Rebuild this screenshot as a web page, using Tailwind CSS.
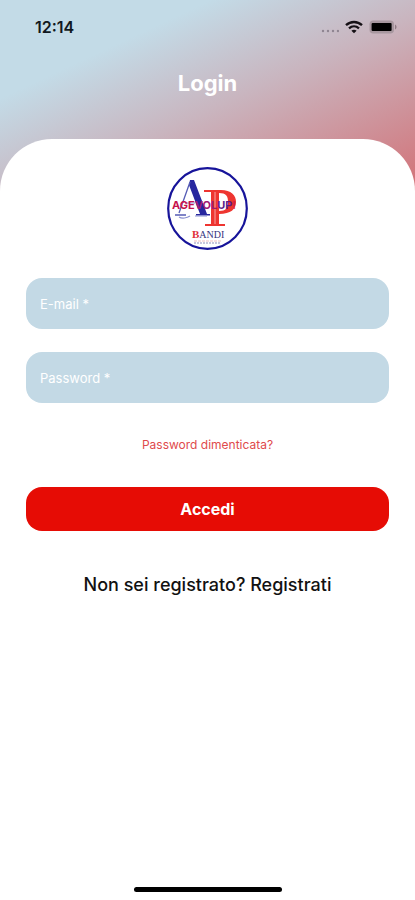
<!DOCTYPE html>
<html lang="it">
<head>
<meta charset="utf-8">
<meta name="viewport" content="width=device-width, initial-scale=1">
<title>Login</title>
<script src="https://cdn.jsdelivr.net/npm/@tailwindcss/browser@4"></script>
</head>
<body class="flex min-h-screen flex-col bg-[linear-gradient(155deg,#c3dbe7_9%,#c9b5bf_19%,#d2767c_34%,#e60b05_62%)] font-['Inter','Liberation_Sans',sans-serif]">
  <div class="flex h-[54px] items-center justify-between pl-[35px] pr-[18px] text-base font-semibold text-[#101820]">
    <span>12:14</span>
    <div class="flex items-center gap-1.5">
      <svg class="h-4 w-5" viewBox="0 0 20 16" fill="#8f8591" aria-hidden="true"><circle cx="4" cy="12" r="1.2"/><circle cx="9" cy="12" r="1.2"/><circle cx="14" cy="12" r="1.2"/><circle cx="19" cy="12" r="1.2"/></svg>
      <svg class="h-3.5 w-4.5" viewBox="0 0 18 14" fill="none" stroke="#151015" stroke-width="2.3" aria-hidden="true"><path d="M1 5.2C5.6.9 12.4.9 17 5.2M4 8.4c2.9-2.6 7.1-2.6 10 0"/><path d="M9 13.3 6.4 10.7c1.5-1.3 3.7-1.3 5.2 0z" fill="#151015" stroke="none"/></svg>
      <svg class="h-3.5 w-7" viewBox="0 0 28 14" aria-hidden="true"><rect x=".5" y=".5" width="24.5" height="13" rx="3.8" fill="#a7979f"/><rect x="2.6" y="3" width="20" height="8" rx="1" fill="#000"/><path d="M26 4.5c2 .8 2 4.2 0 5z" fill="#8e7b83"/></svg>
    </div>
  </div>
  <header class="flex h-[85px] items-start justify-center pt-[13px]">
    <h1 class="text-[22px] leading-8 font-bold text-white">Login</h1>
  </header>
  <main class="flex flex-1 flex-col items-center rounded-t-[52px] bg-white px-[26px] pt-7">
    <svg class="h-[84px] w-[84px]" viewBox="0 0 84 84" role="img" aria-label="Agevolup Bandi">
      <ellipse cx="41.5" cy="41.5" rx="39.3" ry="40.3" fill="#fff" stroke="#17149a" stroke-width="2.2"/>
      <path d="M24 13h4l13 34h3v1.500H30V47h4L23 18z" fill="#27279f"/>
      <path d="M24 15 13 46M9 48h11" fill="none" stroke="#555cb5" stroke-width="1.300"/>
      <path d="M13 50c3 2 8 1 11-1M29 49h12M19 36h10" fill="none" stroke="#8a90cf" stroke-width="1.200"/>
      <path d="M38 23h17c10 0 15 5 15 12S65 47 53 47v10h6v2H39v-2h6V25h-7z" fill="#ee3530"/>
      <path d="M53 26c7 0 9 3 9 9s-2 9-9 9z" fill="#fff"/>
      <path d="M49 25v32" stroke="#f8a5a3" stroke-width="1"/>
      <text x="6" y="42" font-family="Inter, sans-serif" font-weight="700" font-size="11" fill="#c6124c">AGE<tspan fill="#a01a75">VOL</tspan><tspan fill="#5b1a89">UP</tspan><tspan fill="#d51b45">!</tspan></text>
      <text x="26" y="71" font-family="Liberation Serif, serif" font-weight="700" font-size="11" fill="#df3038">B<tspan font-weight="400" font-size="10" fill="#35357f">ANDI</tspan></text>
      <path d="M28 74h28" stroke="#f0bfc0" stroke-width="1" stroke-dasharray="3 1"/>
      <path d="M28 76h27" stroke="#8f8fbb" stroke-width="1" stroke-dasharray="2 1"/>
    </svg>
    <form class="mt-[27px] flex w-full flex-col" onsubmit="return false">
      <input type="email" aria-label="E-mail" placeholder="E-mail *" class="h-[51px] w-full rounded-2xl bg-[#c3d9e5] px-3.5 text-[13px] text-white outline-none placeholder:text-white">
      <input type="password" aria-label="Password" placeholder="Password *" class="mt-[23px] h-[51px] w-full rounded-2xl bg-[#c3d9e5] px-3.5 text-[13px] text-white outline-none placeholder:text-white">
      <a href="#" class="mt-8 self-center text-xs leading-5 text-[#e04a4c]">Password dimenticata?</a>
      <button type="submit" class="mt-8 h-11 w-full rounded-2xl bg-[#e60c05] text-base font-bold text-white">Accedi</button>
    </form>
    <a href="#" class="mt-10 text-lg leading-7 font-medium text-[#111]">Non sei registrato? Registrati</a>
    <div class="mt-auto mb-2 h-[5px] w-[148px] rounded-full bg-black"></div>
  </main>
</body>
</html>
